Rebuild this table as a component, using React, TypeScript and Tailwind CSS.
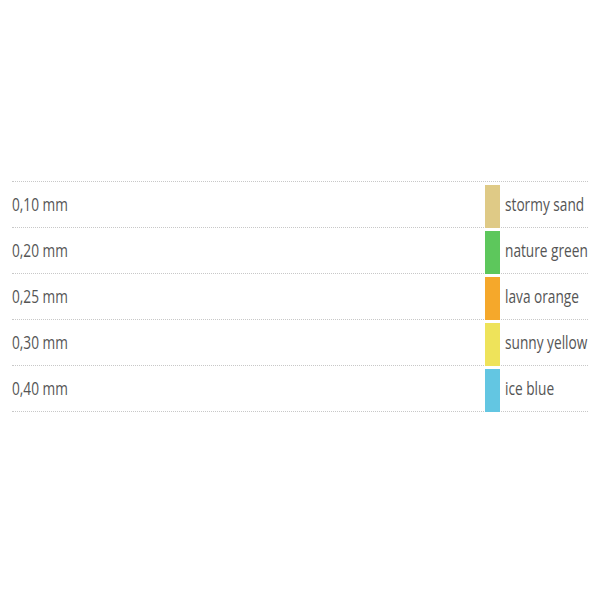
const rows = [
  { size: '0,10 mm', color: 'bg-[#dfca86]', name: 'stormy sand' },
  { size: '0,20 mm', color: 'bg-[#5dc75c]', name: 'nature green' },
  { size: '0,25 mm', color: 'bg-[#f5a82b]', name: 'lava orange' },
  { size: '0,30 mm', color: 'bg-[#eee35a]', name: 'sunny yellow' },
  { size: '0,40 mm', color: 'bg-[#63c6e2]', name: 'ice blue' },
];

// the source font is a condensed sans, so squeeze Open Sans horizontally
const label = 'inline-block whitespace-nowrap origin-left scale-x-[0.72]';

export default function App() {
  return (
    <div className="w-[600px] h-[600px] bg-white pt-[181px] px-3 font-['Open_Sans',sans-serif] text-[19px] text-[#555]">
      <div className="border-t border-dotted border-[#c8c8c8]">
        {rows.map((r) => (
          <div key={r.size} className="flex h-[46px] border-b border-dotted border-[#c8c8c8]">
            <div className="flex-1 flex items-center">
              <span className={label}>{r.size}</span>
            </div>
            <div className="w-[103px] flex">
              <div className={`w-[15px] shrink-0 mt-[3px] -mb-px relative ${r.color}`} />
              <div className="ml-[5px] flex items-center">
                <span className={label}>{r.name}</span>
              </div>
            </div>
          </div>
        ))}
      </div>
    </div>
  );
}
